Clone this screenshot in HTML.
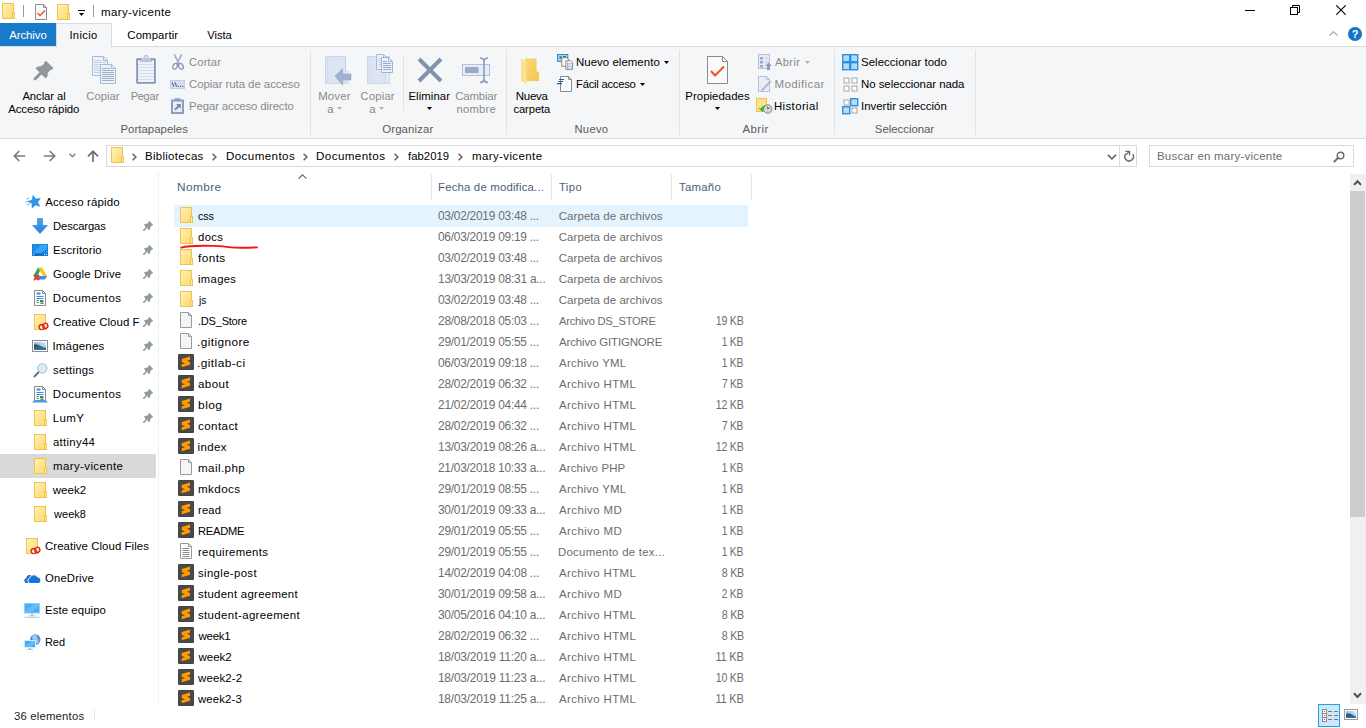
<!DOCTYPE html>
<html lang="es"><head><meta charset="utf-8"><title>mary-vicente</title>
<style>
html,body{margin:0;padding:0;}
body{width:1366px;height:728px;position:relative;overflow:hidden;background:#fff;font-family:"Liberation Sans", "DejaVu Sans", sans-serif;font-size:12px;}
.t{position:absolute;white-space:nowrap;line-height:16px;height:16px;}
.c{width:0;display:flex;justify-content:center;}
.c span{display:inline-block;flex:none;}
.r{position:absolute;display:block;}

</style></head><body>
<svg width="0" height="0" style="position:absolute;left:0;top:0"><defs>
<linearGradient id="fg" x1="0" y1="0" x2="1" y2="1"><stop offset="0" stop-color="#fff1b8"/><stop offset="1" stop-color="#ffd96b"/></linearGradient>
<linearGradient id="dlg" x1="0" y1="0" x2="0" y2="1"><stop offset="0" stop-color="#4ba3ef"/><stop offset="1" stop-color="#2583dc"/></linearGradient>
<linearGradient id="nf" x1="0" y1="0" x2="1" y2="1"><stop offset="0" stop-color="#f7d877"/><stop offset="1" stop-color="#f3c64f"/></linearGradient>
<linearGradient id="sky" x1="0" y1="1" x2="1" y2="0"><stop offset="0" stop-color="#3f8fd6"/><stop offset="1" stop-color="#e6f3fb"/></linearGradient>
</defs></svg>
<div class="r" style="left:0px;top:46px;width:1366px;height:92px;background:#f5f6f7;"></div>
<div class="r" style="left:0px;top:46px;width:1366px;height:1px;background:#dadbdc;"></div>
<div class="r" style="left:0px;top:138px;width:1366px;height:1px;background:#dadbdc;"></div>
<div class="r" style="left:0px;top:23px;width:56px;height:23px;background:#1979ca;"></div>
<div class="r" style="left:56px;top:23px;width:56px;height:24px;background:#f5f6f7;border:1px solid #dadbdc;border-bottom:none;box-sizing:border-box;"></div>
<svg class="r" style="left:2px;top:3px;" width="13" height="16" viewBox="0 0 13 16"><rect x="0.5" y="0.5" width="11" height="15" fill="#ffe08a" stroke="#ecc451"/><rect x="1" y="1" width="10" height="14" fill="url(#fg)"/><rect x="10.5" y="9.5" width="2" height="6" fill="#ffe9a6" stroke="#ecc451"/></svg>
<div class="r" style="left:23px;top:5px;width:1px;height:12px;background:#9a9a9a;"></div>
<svg class="r" style="left:35px;top:4px;" width="12" height="16" viewBox="0 0 12 16"><path d="M0.5 0.5 H8.5 L11.5 3.5 V15.5 H0.5 Z" fill="#f7f8f9" stroke="#8c8c8c"/><path d="M8.5 0.5 V3.5 H11.5" fill="none" stroke="#8c8c8c"/><path d="M2.5 9 L5 11.5 L10 6.5" fill="none" stroke="#f4511e" stroke-width="1.4"/></svg>
<svg class="r" style="left:57px;top:4px;" width="13" height="16" viewBox="0 0 13 16"><rect x="0.5" y="0.5" width="11" height="15" fill="#ffe08a" stroke="#ecc451"/><rect x="1" y="1" width="10" height="14" fill="url(#fg)"/><rect x="10.5" y="9.5" width="2" height="6" fill="#ffe9a6" stroke="#ecc451"/></svg>
<div class="r" style="left:78px;top:10px;width:7px;height:1px;background:#000;"></div>
<svg class="r" style="left:79px;top:13px;" width="5" height="3" viewBox="0 0 5 3"><path d="M0 0 H5 L2.5 3 Z" fill="#000"/></svg>
<div class="r" style="left:93px;top:5px;width:1px;height:12px;background:#9a9a9a;"></div>
<span class="t " id="t1" style="left:101.10px;top:4px;color:#000;font-size:11.5px;letter-spacing:0.400px;transform:scaleX(0.9962);transform-origin:0 50%;">mary-vicente</span>
<div class="r" style="left:1245px;top:10px;width:10px;height:1px;background:#000;"></div>
<svg class="r" style="left:1290px;top:5px;" width="10" height="10" viewBox="0 0 10 10"><path d="M2.5 2.5 V0.5 H9.5 V7.5 H7.5" fill="none" stroke="#000"/><rect x="0.5" y="2.5" width="7" height="7" fill="none" stroke="#000"/></svg>
<svg class="r" style="left:1336px;top:5px;" width="10" height="10" viewBox="0 0 10 10"><path d="M0.3 0.3 L9.7 9.7 M9.7 0.3 L0.3 9.7" stroke="#000" stroke-width="1.1" fill="none"/></svg>
<div class="t c" style="left:28.34px;top:27px;"><span id="t2" style="color:#fff;font-size:11.5px;letter-spacing:-0.073px;transform:scaleX(0.9931);transform-origin:50% 50%;">Archivo</span></div>
<div class="t c" style="left:83.75px;top:27px;"><span id="t3" style="color:#000;font-size:11.5px;letter-spacing:0.376px;transform:scaleX(0.9727);transform-origin:50% 50%;">Inicio</span></div>
<div class="t c" style="left:152.77px;top:27px;"><span id="t4" style="color:#000;font-size:11.5px;letter-spacing:0.121px;transform:scaleX(0.9870);transform-origin:50% 50%;">Compartir</span></div>
<div class="t c" style="left:219.41px;top:27px;"><span id="t5" style="color:#000;font-size:11.5px;letter-spacing:-0.074px;transform:scaleX(0.9731);transform-origin:50% 50%;">Vista</span></div>
<svg class="r" style="left:1329px;top:31px;" width="9" height="5" viewBox="0 0 9 5"><path d="M0.5 4.5 L4.5 0.7 L8.5 4.5" fill="none" stroke="#a0a0a0" stroke-width="1.1"/></svg>
<div class="r" style="left:1348px;top:27px;width:14px;height:14px;border-radius:7px;background:#1572c8;color:#fff;font-weight:bold;font-size:11px;line-height:14px;text-align:center;">?</div>
<div class="r" style="left:310px;top:50px;width:1px;height:85px;background:#e2e3e4;"></div>
<div class="r" style="left:506px;top:50px;width:1px;height:85px;background:#e2e3e4;"></div>
<div class="r" style="left:679px;top:50px;width:1px;height:85px;background:#e2e3e4;"></div>
<div class="r" style="left:834px;top:50px;width:1px;height:85px;background:#e2e3e4;"></div>
<div class="r" style="left:975px;top:50px;width:1px;height:85px;background:#e2e3e4;"></div>
<div class="r" style="left:403px;top:56px;width:1px;height:55px;background:#e2e3e4;"></div>
<svg class="r" style="left:24.3px;top:50.5px;" width="39" height="39" viewBox="0 0 39 39"><path d="M21.91 9.64 L29.36 17.09 L27.57 18.88 L26.05 19.02 L23.43 22.74 L23.84 24.81 L21.64 27.57 L17.64 23.57 L11.85 29.36 L9.64 29.36 L9.64 27.15 L15.43 21.36 L11.43 17.36 L14.19 15.16 L16.26 15.57 L19.98 12.95 L20.12 11.43 Z" fill="#8f979c"/></svg>
<div class="t c" style="left:44.16px;top:88px;"><span id="t6" style="color:#000;font-size:11.5px;letter-spacing:-0.076px;transform:scaleX(0.9810);transform-origin:50% 50%;">Anclar al</span></div>
<div class="t c" style="left:43.64px;top:101px;"><span id="t7" style="color:#000;font-size:11.5px;letter-spacing:-0.106px;transform:scaleX(0.9962);transform-origin:50% 50%;">Acceso rápido</span></div>
<svg class="r" style="left:92px;top:56px;" width="24" height="28" viewBox="0 0 24 28"><path d="M0.5 0.5 H11.5 L15.5 4.5 V19.5 H0.5 Z" fill="#ecf1fa" stroke="#a9b8d6"/><path d="M11.5 0.5 V4.5 H15.5" fill="none" stroke="#a9b8d6"/><path d="M2 4.5 H10" stroke="#c5d0e6"/><path d="M2 6.5 H14" stroke="#c5d0e6"/><path d="M2 8.5 H14" stroke="#c5d0e6"/><path d="M2 10.5 H14" stroke="#c5d0e6"/><path d="M2 12.5 H14" stroke="#c5d0e6"/><path d="M2 14.5 H14" stroke="#c5d0e6"/><path d="M2 16.5 H14" stroke="#c5d0e6"/><path d="M8.5 8.5 H19.5 L23.5 12.5 V27.5 H8.5 Z" fill="#ecf1fa" stroke="#a9b8d6"/><path d="M19.5 8.5 V12.5 H23.5" fill="none" stroke="#a9b8d6"/><path d="M10 12.5 H18" stroke="#9fb0cf"/><path d="M10 14.5 H22" stroke="#9fb0cf"/><path d="M10 16.5 H22" stroke="#9fb0cf"/><path d="M10 18.5 H22" stroke="#9fb0cf"/><path d="M10 20.5 H22" stroke="#9fb0cf"/><path d="M10 22.5 H22" stroke="#9fb0cf"/><path d="M10 24.5 H22" stroke="#9fb0cf"/></svg>
<div class="t c" style="left:102.71px;top:88px;"><span id="t8" style="color:#8a8a8a;font-size:11.5px;letter-spacing:-0.004px;transform:scaleX(0.9838);transform-origin:50% 50%;">Copiar</span></div>
<svg class="r" style="left:136px;top:55px;" width="20" height="29" viewBox="0 0 20 29"><rect x="0.200" y="3.200" width="19.600" height="25.600" rx="1.200" fill="#8596ba"/><rect x="2" y="5.300" width="16" height="21.700" fill="#eef2fb"/><path d="M2.500 9.500 H17.500 M2.500 12.500 H17.500 M2.500 15.500 H17.500 M2.500 18.500 H17.500 M2.500 21.500 H17.500 M2.500 24.500 H17.500" stroke="#d3dbee"/><path d="M6 3.500 H14 L16 6.200 H4 Z" fill="#c9d3ea"/><path d="M4 6.200 H16" stroke="#8f9fc2" stroke-width="0.800"/><rect x="8.200" y="0.600" width="3.600" height="3.400" rx="1.300" fill="#e3e8f4" stroke="#a3b0cf" stroke-width="1"/></svg>
<div class="t c" style="left:145.13px;top:88px;"><span id="t9" style="color:#8a8a8a;font-size:11.5px;letter-spacing:-0.250px;transform:scaleX(0.9571);transform-origin:50% 50%;">Pegar</span></div>
<svg class="r" style="left:172px;top:54px;" width="12" height="16" viewBox="0 0 12 16"><path d="M2.300 0.300 L7.300 10.500 M9.700 0.300 L4.700 10.500" stroke="#a3b0cc" stroke-width="1.700" fill="none"/><ellipse cx="3.100" cy="12.300" rx="2.100" ry="3" transform="rotate(28 3.100 12.300)" fill="none" stroke="#8797ba" stroke-width="1.400"/><ellipse cx="8.900" cy="12.300" rx="2.100" ry="3" transform="rotate(-28 8.900 12.300)" fill="none" stroke="#8797ba" stroke-width="1.400"/></svg>
<span class="t " id="t10" style="left:189.24px;top:54px;color:#8a8a8a;font-size:11.5px;letter-spacing:0.160px;transform:scaleX(0.9745);transform-origin:0 50%;">Cortar</span>
<svg class="r" style="left:170px;top:80px;" width="15" height="9" viewBox="0 0 15 9"><rect x="0.500" y="0.500" width="14" height="8" fill="#d8e0f0" stroke="#c3cee6"/><path d="M2 2.300 L4 6.800 M4.800 2.300 L6.800 6.800" stroke="#5f709b" stroke-width="1.200" fill="none"/><path d="M7.800 6.300 H9 M10 6.300 H11.200 M12.200 6.300 H13.400" stroke="#5f709b" stroke-width="1.200"/></svg>
<span class="t " id="t11" style="left:188.91px;top:76px;color:#8a8a8a;font-size:11.5px;letter-spacing:-0.068px;transform:scaleX(0.9973);transform-origin:0 50%;">Copiar ruta de acceso</span>
<svg class="r" style="left:171px;top:98px;" width="13" height="16" viewBox="0 0 13 16"><rect x="1" y="2.500" width="11" height="12.500" fill="#e8edf7" stroke="#8d9dc0" stroke-width="2"/><rect x="3.500" y="0.300" width="6" height="2" fill="#8d9dc0"/><path d="M4 11.800 L8 7.800" fill="none" stroke="#7486ae" stroke-width="2"/><path d="M5 6 H9.800 V10.800 Z" fill="#7486ae"/></svg>
<span class="t " id="t12" style="left:188.82px;top:98px;color:#8a8a8a;font-size:11.5px;letter-spacing:-0.130px;transform:scaleX(0.9931);transform-origin:0 50%;">Pegar acceso directo</span>
<div class="t c" style="left:154.13px;top:121px;"><span id="t13" style="color:#5b5b5b;font-size:11.5px;letter-spacing:0.049px;transform:scaleX(0.9876);transform-origin:50% 50%;">Portapapeles</span></div>
<svg class="r" style="left:325px;top:56px;" width="27" height="30" viewBox="0 0 27 30"><rect x="0.500" y="0.500" width="20" height="27" fill="#dde5f3" stroke="#c9d5ea"/><path d="M2.800 1 V27" stroke="#cfd9ec"/><rect x="20.500" y="15.500" width="2.500" height="12" fill="#e3e9f5" stroke="#d0daec"/><path d="M10 20 L17.600 12.800 V18 H26 V24 H17.600 V29.200 Z" fill="#a3b1cd" stroke="#93a3c4" stroke-width="0.600"/></svg>
<div class="t c" style="left:334.76px;top:88px;"><span id="t14" style="color:#8a8a8a;font-size:11.5px;letter-spacing:0.184px;transform:scaleX(0.9898);transform-origin:50% 50%;">Mover</span></div>
<div class="t c" style="left:330.37px;top:101px;"><span id="t15" style="color:#8a8a8a;font-size:11.5px;letter-spacing:-0.155px;">a</span></div>
<svg class="r" style="left:337px;top:107px;" width="5" height="3" viewBox="0 0 5 3"><path d="M0 0 H5 L2.5 3 Z" fill="#b0b0b0"/></svg>
<svg class="r" style="left:367px;top:53px;" width="27" height="32" viewBox="0 0 27 32"><rect x="0.500" y="3.500" width="21.800" height="27" fill="#dde5f3" stroke="#c9d5ea"/><path d="M2.800 4 V30" stroke="#cfd9ec"/><rect x="18.300" y="19" width="4" height="11.500" fill="#e4eaf6" stroke="#cdd7eb"/><g transform="translate(9,1)"><path d="M0.5 0.5 H7.5 L11.5 4.5 V15.5 H0.5 Z" fill="#eef2fb" stroke="#a9b8d6"/><path d="M7.5 0.5 V4.5 H11.5" fill="none" stroke="#a9b8d6"/><path d="M2 4.5 H6" stroke="#c9d3e8"/><path d="M2 6.5 H10" stroke="#c9d3e8"/><path d="M2 8.5 H10" stroke="#c9d3e8"/><path d="M2 10.5 H10" stroke="#c9d3e8"/><path d="M2 12.5 H10" stroke="#c9d3e8"/></g><g transform="translate(14,4)"><path d="M0.5 0.5 H7.5 L11.5 4.5 V15.5 H0.5 Z" fill="#eef2fb" stroke="#a3b3d3"/><path d="M7.5 0.5 V4.5 H11.5" fill="none" stroke="#a3b3d3"/><path d="M2 4.5 H6" stroke="#98a9c9"/><path d="M2 6.5 H10" stroke="#98a9c9"/><path d="M2 8.5 H10" stroke="#98a9c9"/><path d="M2 10.5 H10" stroke="#98a9c9"/><path d="M2 12.5 H10" stroke="#98a9c9"/></g></svg>
<div class="t c" style="left:377.49px;top:88px;"><span id="t16" style="color:#8a8a8a;font-size:11.5px;letter-spacing:0.260px;transform:scaleX(0.9649);transform-origin:50% 50%;">Copiar</span></div>
<div class="t c" style="left:372.37px;top:101px;"><span id="t17" style="color:#8a8a8a;font-size:11.5px;letter-spacing:-0.155px;">a</span></div>
<svg class="r" style="left:379px;top:107px;" width="5" height="3" viewBox="0 0 5 3"><path d="M0 0 H5 L2.5 3 Z" fill="#b0b0b0"/></svg>
<svg class="r" style="left:417px;top:57px;" width="26" height="26" viewBox="0 0 26 26"><path d="M2 2 L24 24 M24 2 L2 24" stroke="#8492b2" stroke-width="4" fill="none"/></svg>
<div class="t c" style="left:429.47px;top:88px;"><span id="t18" style="color:#000;font-size:11.5px;letter-spacing:0.116px;transform:scaleX(0.9809);transform-origin:50% 50%;">Eliminar</span></div>
<svg class="r" style="left:427px;top:107px;" width="5" height="3" viewBox="0 0 5 3"><path d="M0 0 H5 L2.5 3 Z" fill="#000"/></svg>
<svg class="r" style="left:462px;top:57px;" width="28" height="27" viewBox="0 0 28 27"><rect x="0.5" y="7.5" width="27" height="11" fill="#e7ecf7" stroke="#b4c1dc"/><rect x="3" y="10" width="13.5" height="6" fill="#9aa9c8"/><path d="M18 1 Q21.5 1 22 4 Q22.5 1 26 1 M18 25.5 Q21.5 25.5 22 22.5 Q22.5 25.5 26 25.5 M22 3.5 V23" fill="none" stroke="#8d9dc0" stroke-width="1.6"/></svg>
<div class="t c" style="left:476.38px;top:88px;"><span id="t19" style="color:#8a8a8a;font-size:11.5px;letter-spacing:-0.169px;transform:scaleX(0.9883);transform-origin:50% 50%;">Cambiar</span></div>
<div class="t c" style="left:476.04px;top:101px;"><span id="t20" style="color:#8a8a8a;font-size:11.5px;letter-spacing:0.261px;transform:scaleX(0.9716);transform-origin:50% 50%;">nombre</span></div>
<div class="t c" style="left:407.92px;top:121px;"><span id="t21" style="color:#5b5b5b;font-size:11.5px;letter-spacing:0.121px;transform:scaleX(0.9885);transform-origin:50% 50%;">Organizar</span></div>
<svg class="r" style="left:521px;top:57px;" width="19" height="28" viewBox="0 0 19 28"><path d="M4 1.5 H15.5 V14 L18 15.5 V24 H4 Z" fill="url(#nf)"/><path d="M0 1.5 L5.5 4.5 V27.5 L0 23.5 Z" fill="#fbe28f"/></svg>
<div class="t c" style="left:531.73px;top:88px;"><span id="t22" style="color:#000;font-size:11.5px;letter-spacing:-0.250px;">Nueva</span></div>
<div class="t c" style="left:531.77px;top:101px;"><span id="t23" style="color:#000;font-size:11.5px;letter-spacing:-0.104px;transform:scaleX(0.9776);transform-origin:50% 50%;">carpeta</span></div>
<svg class="r" style="left:557px;top:54px;" width="16" height="16" viewBox="0 0 16 16"><rect x="0.5" y="0.5" width="10.3" height="6.8" fill="#a9d3ee" stroke="#2e86c7"/><rect x="2.5" y="2" width="2" height="3" fill="#4b8a4b"/><rect x="6" y="2" width="3" height="1.5" fill="#2f6fb5"/><path d="M4.800 3.800 H9.800 L11.500 5.500 V12.300 H4.800 Z" fill="#fdfdfd" stroke="#8a8a8a"/><path d="M8.800 6.700 H13.800 L15.500 8.400 V15.400 H8.800 Z" fill="#fdfdfd" stroke="#8a8a8a"/><path d="M9.500 9.500 H15 M9.500 11 H15 M9.500 12.500 H15 M9.500 14 H15" stroke="#9cc3ee" stroke-width="0.800"/><path d="M10.700 7.500 V15" stroke="#f08a8a" stroke-width="0.900"/></svg>
<span class="t " id="t24" style="left:575.95px;top:54px;color:#000;font-size:11.5px;letter-spacing:0.052px;transform:scaleX(0.9917);transform-origin:0 50%;">Nuevo elemento</span>
<svg class="r" style="left:664px;top:61px;" width="5" height="3" viewBox="0 0 5 3"><path d="M0 0 H5 L2.5 3 Z" fill="#000"/></svg>
<svg class="r" style="left:557px;top:76px;" width="16" height="16" viewBox="0 0 16 16"><path d="M3.500 0.500 H11.500 L14.500 3.500 V15.500 H3.500 Z" fill="#fbfbfc" stroke="#8a8a8a"/><path d="M11.500 0.500 V3.500 H14.500" fill="none" stroke="#8a8a8a"/><path d="M2.100 3.500 H7 M1.200 5.500 H6 M0 7.600 H5" stroke="#1660a8" stroke-width="1.100"/></svg>
<span class="t " id="t25" style="left:575.74px;top:76px;color:#000;font-size:11.5px;letter-spacing:-0.250px;transform:scaleX(0.9781);transform-origin:0 50%;">Fácil acceso</span>
<svg class="r" style="left:640px;top:83px;" width="5" height="3" viewBox="0 0 5 3"><path d="M0 0 H5 L2.5 3 Z" fill="#000"/></svg>
<div class="t c" style="left:591.63px;top:121px;"><span id="t26" style="color:#5b5b5b;font-size:11.5px;letter-spacing:0.322px;transform:scaleX(0.9753);transform-origin:50% 50%;">Nuevo</span></div>
<svg class="r" style="left:707px;top:56px;" width="21" height="28" viewBox="0 0 21 28"><path d="M0.5 0.5 H15.5 L20.5 5.5 V27.5 H0.5 Z" fill="#f9fafb" stroke="#8c8c8c"/><path d="M15.5 0.5 V5.5 H20.5" fill="none" stroke="#8c8c8c"/><path d="M4 15 L8 19.5 L17 10.5" fill="none" stroke="#f4511e" stroke-width="2"/></svg>
<div class="t c" style="left:717.85px;top:88px;"><span id="t27" style="color:#000;font-size:11.5px;letter-spacing:0.032px;transform:scaleX(0.9904);transform-origin:50% 50%;">Propiedades</span></div>
<svg class="r" style="left:715px;top:107px;" width="5" height="3" viewBox="0 0 5 3"><path d="M0 0 H5 L2.5 3 Z" fill="#000"/></svg>
<svg class="r" style="left:758px;top:54px;" width="14" height="16" viewBox="0 0 14 16"><rect x="0.5" y="0.5" width="11" height="14" fill="#e4eaf6" stroke="#b4c1dc"/><path d="M2 3 H5 V5.500 H2 Z M2 7 H5 V9.5 H2 Z M2 11 H5 V13.5 H2 Z" fill="#9aa9c8"/><path d="M6.5 4 H10 M6.500 8 H10" stroke="#c3cde3"/><path d="M10.5 8.5 L14 12 H12 V16 H9 V12 H7 Z" fill="#8d9dc0"/></svg>
<span class="t " id="t28" style="left:774.90px;top:54px;color:#8a8a8a;font-size:11.5px;letter-spacing:0.345px;transform:scaleX(0.9718);transform-origin:0 50%;">Abrir</span>
<svg class="r" style="left:805px;top:61px;" width="5" height="3" viewBox="0 0 5 3"><path d="M0 0 H5 L2.5 3 Z" fill="#b0b0b0"/></svg>
<svg class="r" style="left:758px;top:76px;" width="14" height="16" viewBox="0 0 14 16"><path d="M0.5 0.5 H8.5 L11.5 3.5 V15.5 H0.5 Z" fill="#e7ecf7" stroke="#b4c1dc"/><path d="M8.5 0.5 V3.5 H11.5" fill="none" stroke="#b4c1dc"/><path d="M3 14 L12 4.500 L13.500 6 L4.500 15 Z" fill="#aab6d3"/></svg>
<span class="t " id="t29" style="left:774.44px;top:76px;color:#8a8a8a;font-size:11.5px;letter-spacing:0.400px;">Modificar</span>
<svg class="r" style="left:756px;top:98px;" width="17" height="16" viewBox="0 0 17 16"><rect x="0.500" y="0.500" width="10" height="13" fill="#ffe08a" stroke="#ecc451"/><circle cx="11.700" cy="11" r="4.300" fill="#dcdcdc" stroke="#7d7d7d" stroke-width="0.900"/><path d="M11.700 8.300 V11 L13.700 9.600" fill="none" stroke="#444" stroke-width="0.800"/><path d="M11.700 13.300 V14.300 M9 11 H9.800 M13.800 11 H14.500" stroke="#666" stroke-width="0.600"/><path d="M2 10.300 L7.200 14 L7 11.300 Q8.500 9.500 10.200 7.200 Q6.500 7 4.800 10.500 Z" fill="#2db53a"/></svg>
<span class="t " id="t30" style="left:774.38px;top:98px;color:#000;font-size:11.5px;letter-spacing:0.397px;transform:scaleX(0.9898);transform-origin:0 50%;">Historial</span>
<div class="t c" style="left:755.55px;top:121px;"><span id="t31" style="color:#5b5b5b;font-size:11.5px;letter-spacing:0.376px;">Abrir</span></div>
<svg class="r" style="left:842px;top:54px;" width="17" height="17" viewBox="0 0 17 17"><rect x="0.7" y="0.7" width="7" height="7" fill="#b3dcf9" stroke="#2e90e0" stroke-width="1.4"/><rect x="8.7" y="0.7" width="7" height="7" fill="#b3dcf9" stroke="#2e90e0" stroke-width="1.4"/><rect x="0.7" y="8.7" width="7" height="7" fill="#b3dcf9" stroke="#2e90e0" stroke-width="1.4"/><rect x="8.7" y="8.7" width="7" height="7" fill="#b3dcf9" stroke="#2e90e0" stroke-width="1.4"/></svg>
<span class="t " id="t32" style="left:860.61px;top:54px;color:#000;font-size:11.5px;letter-spacing:0.036px;transform:scaleX(0.9965);transform-origin:0 50%;">Seleccionar todo</span>
<svg class="r" style="left:842px;top:76px;" width="17" height="17" viewBox="0 0 17 17"><rect x="2" y="2" width="5" height="5" fill="#fdfdfd" stroke="#a6a6a6"/><rect x="10" y="2" width="5" height="5" fill="#fdfdfd" stroke="#a6a6a6"/><rect x="2" y="10" width="5" height="5" fill="#fdfdfd" stroke="#a6a6a6"/><rect x="10" y="10" width="5" height="5" fill="#fdfdfd" stroke="#a6a6a6"/></svg>
<span class="t " id="t33" style="left:861.05px;top:76px;color:#000;font-size:11.5px;letter-spacing:-0.053px;transform:scaleX(0.9959);transform-origin:0 50%;">No seleccionar nada</span>
<svg class="r" style="left:842px;top:98px;" width="17" height="17" viewBox="0 0 17 17"><rect x="2" y="2" width="5" height="5" fill="#fdfdfd" stroke="#a6a6a6"/><rect x="8.7" y="0.7" width="7" height="7" fill="#b3dcf9" stroke="#2e90e0" stroke-width="1.4"/><rect x="0.7" y="8.7" width="7" height="7" fill="#b3dcf9" stroke="#2e90e0" stroke-width="1.4"/><rect x="10" y="10" width="5" height="5" fill="#fdfdfd" stroke="#a6a6a6"/></svg>
<span class="t " id="t34" style="left:860.56px;top:98px;color:#000;font-size:11.5px;letter-spacing:0.012px;transform:scaleX(0.9913);transform-origin:0 50%;">Invertir selección</span>
<div class="t c" style="left:904.46px;top:121px;"><span id="t35" style="color:#5b5b5b;font-size:11.5px;letter-spacing:-0.067px;">Seleccionar</span></div>
<svg class="r" style="left:12.5px;top:149.8px;" width="13" height="12" viewBox="0 0 13 12"><path d="M12.2 6 H1.6 M6.3 1 L1.3 6 L6.3 11" fill="none" stroke="#7c7c7c" stroke-width="1.7"/></svg>
<svg class="r" style="left:42.5px;top:149.8px;" width="13" height="12" viewBox="0 0 13 12"><path d="M0.8 6 H11.4 M6.7 1 L11.7 6 L6.7 11" fill="none" stroke="#7c7c7c" stroke-width="1.7"/></svg>
<svg class="r" style="left:69px;top:153px;" width="7" height="5" viewBox="0 0 7 5"><path d="M0.6 0.8 L3.5 3.7 L6.4 0.8" fill="none" stroke="#808080" stroke-width="1.4"/></svg>
<svg class="r" style="left:87px;top:150px;" width="12" height="13" viewBox="0 0 12 13"><path d="M6 12 V1.6 M1 6.3 L6 1.300 L11 6.3" fill="none" stroke="#6e6e6e" stroke-width="1.7"/></svg>
<div class="r" style="left:106px;top:145px;width:1031px;height:22px;background:#fff;border:1px solid #d9d9d9;box-sizing:border-box;"></div>
<div class="r" style="left:1119px;top:146px;width:1px;height:20px;background:#d9d9d9;"></div>
<svg class="r" style="left:111px;top:147px;" width="13" height="16" viewBox="0 0 13 16"><rect x="0.5" y="0.5" width="11" height="15" fill="#ffe08a" stroke="#ecc451"/><rect x="1" y="1" width="10" height="14" fill="url(#fg)"/><rect x="10.5" y="9.5" width="2" height="6" fill="#ffe9a6" stroke="#ecc451"/></svg>
<svg class="r" style="left:132px;top:152.5px;" width="5" height="8" viewBox="0 0 5 8"><path d="M0.6 0.8 L3.9 4 L0.6 7.2" fill="none" stroke="#666" stroke-width="1.6"/></svg>
<svg class="r" style="left:212px;top:152.5px;" width="5" height="8" viewBox="0 0 5 8"><path d="M0.6 0.8 L3.9 4 L0.6 7.2" fill="none" stroke="#666" stroke-width="1.6"/></svg>
<svg class="r" style="left:303px;top:152.5px;" width="5" height="8" viewBox="0 0 5 8"><path d="M0.6 0.8 L3.9 4 L0.6 7.2" fill="none" stroke="#666" stroke-width="1.6"/></svg>
<svg class="r" style="left:394px;top:152.5px;" width="5" height="8" viewBox="0 0 5 8"><path d="M0.6 0.8 L3.9 4 L0.6 7.2" fill="none" stroke="#666" stroke-width="1.6"/></svg>
<svg class="r" style="left:458px;top:152.5px;" width="5" height="8" viewBox="0 0 5 8"><path d="M0.6 0.8 L3.9 4 L0.6 7.2" fill="none" stroke="#666" stroke-width="1.6"/></svg>
<span class="t " id="t36" style="left:145.47px;top:148px;color:#000;font-size:11.5px;letter-spacing:0.315px;transform:scaleX(0.9911);transform-origin:0 50%;">Bibliotecas</span>
<span class="t " id="t37" style="left:225.66px;top:148px;color:#000;font-size:11.5px;letter-spacing:0.400px;transform:scaleX(1.0077);transform-origin:0 50%;">Documentos</span>
<span class="t " id="t38" style="left:316.16px;top:148px;color:#000;font-size:11.5px;letter-spacing:0.400px;transform:scaleX(1.0115);transform-origin:0 50%;">Documentos</span>
<span class="t " id="t39" style="left:407.86px;top:148px;color:#000;font-size:11.5px;letter-spacing:0.054px;transform:scaleX(0.9805);transform-origin:0 50%;">fab2019</span>
<span class="t " id="t40" style="left:471.98px;top:148px;color:#000;font-size:11.5px;letter-spacing:0.400px;transform:scaleX(0.9971);transform-origin:0 50%;">mary-vicente</span>
<svg class="r" style="left:1107px;top:154px;" width="10" height="7" viewBox="0 0 10 7"><path d="M0.8 0.8 L4.9 4.9 L9 0.8" fill="none" stroke="#6a6a6a" stroke-width="1.7"/></svg>
<svg class="r" style="left:1123px;top:150px;" width="12" height="13" viewBox="0 0 12 13"><path d="M2.9 3.8 A4.3 4.3 0 1 0 9.7 4.2" fill="none" stroke="#6e6e6e" stroke-width="1.5"/><path d="M2.3 1.4 H6.6 V5.6" fill="none" stroke="#6e6e6e" stroke-width="1.3"/><path d="M6.4 1.6 L3.2 4.4" fill="none" stroke="#6e6e6e" stroke-width="1.3"/></svg>
<div class="r" style="left:1149px;top:145px;width:205px;height:22px;background:#fff;border:1px solid #d9d9d9;box-sizing:border-box;"></div>
<span class="t " id="t41" style="left:1156.96px;top:148px;color:#6d6d6d;font-size:11.5px;letter-spacing:0.214px;">Buscar en mary-vicente</span>
<svg class="r" style="left:1333px;top:151px;" width="12" height="12" viewBox="0 0 12 12"><circle cx="7.500" cy="4.500" r="3.300" fill="none" stroke="#666" stroke-width="1.400"/><path d="M5 7 L0.800 11.200" stroke="#666" stroke-width="1.800"/></svg>
<div class="r" style="left:158px;top:172px;width:1px;height:532px;background:#f0f0f0;"></div>
<div class="r" style="left:0px;top:454px;width:156px;height:24px;background:#d9d9d9;"></div>
<svg class="r" style="left:25px;top:195px;" width="16" height="13" viewBox="0 0 16 13"><g transform="rotate(-14 9.5 6.5)"><path d="M9.5 0.3 L11.3 4.5 L15.8 4.9 L12.4 7.9 L13.4 12.3 L9.5 10 L5.6 12.3 L6.6 7.9 L3.2 4.9 L7.7 4.5 Z" fill="#2e97ee" stroke="#1c7fd6" stroke-width="0.5"/></g><path d="M1.3 4.2 L4.4 3.2 M0.4 7.3 L4.2 6.1 M1.6 10 L5 8.9" stroke="#5db2f3" stroke-width="0.9"/></svg>
<span class="t " id="t42" style="left:45.16px;top:194px;color:#000;font-size:11.5px;letter-spacing:0.143px;">Acceso rápido</span>
<svg class="r" style="left:32px;top:218px;" width="16" height="16" viewBox="0 0 16 16"><path d="M5.500 0.400 H10.500 V7.400 H15.300 L8 15.600 L0.700 7.400 H5.500 Z" fill="url(#dlg)" stroke="#1d78cf" stroke-width="0.600"/></svg>
<span class="t " id="t43" style="left:52.53px;top:218px;color:#000;font-size:11.5px;letter-spacing:-0.116px;transform:scaleX(0.9777);transform-origin:0 50%;">Descargas</span>
<svg class="r" style="left:138px;top:216px;" width="20" height="20" viewBox="0 0 20 20"><path d="M11.24 4.94 L15.06 8.76 L14.14 9.68 L13.36 9.75 L12.02 11.66 L12.23 12.72 L11.10 14.14 L9.05 12.09 L6.08 15.06 L4.94 15.06 L4.94 13.92 L7.91 10.95 L5.86 8.90 L7.28 7.77 L8.34 7.98 L10.25 6.64 L10.32 5.86 Z" fill="#8f9ba3"/></svg>
<svg class="r" style="left:32px;top:244px;" width="16" height="12" viewBox="0 0 16 12"><rect x="0" y="0" width="16" height="12" fill="#1b8fe8"/><path d="M0.5 9.5 L9.5 0.500 H15.500 V3.500 L8.500 9.500 Z" fill="#35a5f5"/><rect x="0.250" y="0.250" width="15.500" height="11.500" fill="none" stroke="#1479cf" stroke-width="0.500"/><rect x="0.500" y="9.500" width="15" height="2" fill="#0f66b8"/><path d="M1.200 10.500 H2.200 M12 10.500 H13 M13.800 10.500 H14.800" stroke="#fff" stroke-width="1"/></svg>
<span class="t " id="t44" style="left:52.55px;top:242px;color:#000;font-size:11.5px;letter-spacing:0.171px;transform:scaleX(0.9838);transform-origin:0 50%;">Escritorio</span>
<svg class="r" style="left:138px;top:240px;" width="20" height="20" viewBox="0 0 20 20"><path d="M11.24 4.94 L15.06 8.76 L14.14 9.68 L13.36 9.75 L12.02 11.66 L12.23 12.72 L11.10 14.14 L9.05 12.09 L6.08 15.06 L4.94 15.06 L4.94 13.92 L7.91 10.95 L5.86 8.90 L7.28 7.77 L8.34 7.98 L10.25 6.64 L10.32 5.86 Z" fill="#8f9ba3"/></svg>
<svg class="r" style="left:33px;top:267px;" width="14" height="14" viewBox="0 0 14 14"><path d="M5 0.500 H9 L14 9 H10 Z" fill="#f7c325"/><path d="M5 0.500 L0.500 8.500 L2.500 12 L7 4 Z" fill="#2da55a"/><path d="M4.500 9 H14 L12 12.500 H2.500 Z" fill="#4a86e8"/><path d="M1 8 L6 13 M6 8 L1 13" stroke="#e5392d" stroke-width="1.800"/></svg>
<span class="t " id="t45" style="left:52.99px;top:266px;color:#000;font-size:11.5px;letter-spacing:0.152px;transform:scaleX(0.9899);transform-origin:0 50%;">Google Drive</span>
<svg class="r" style="left:138px;top:264px;" width="20" height="20" viewBox="0 0 20 20"><path d="M11.24 4.94 L15.06 8.76 L14.14 9.68 L13.36 9.75 L12.02 11.66 L12.23 12.72 L11.10 14.14 L9.05 12.09 L6.08 15.06 L4.94 15.06 L4.94 13.92 L7.91 10.95 L5.86 8.90 L7.28 7.77 L8.34 7.98 L10.25 6.64 L10.32 5.86 Z" fill="#8f9ba3"/></svg>
<svg class="r" style="left:34px;top:290px;" width="12" height="16" viewBox="0 0 12 16"><path d="M0.500 0.500 H8.500 L11.500 3.500 V15.500 H0.500 Z" fill="#fff" stroke="#8c8c8c"/><path d="M8.500 0.500 V3.500 H11.500" fill="none" stroke="#8c8c8c"/><path d="M2.500 6.500 H9.500 M2.500 8.500 H9.500" stroke="#2f8fe4"/><path d="M2.500 3.500 H6.500" stroke="#2f8fe4" stroke-width="2"/><path d="M2.500 10.500 H5 M2.500 12.500 H5 M6.500 13.500 H9.500" stroke="#777"/><rect x="6" y="10" width="3.500" height="2.500" fill="#3b8a4a"/></svg>
<span class="t " id="t46" style="left:52.84px;top:290px;color:#000;font-size:11.5px;letter-spacing:0.400px;">Documentos</span>
<svg class="r" style="left:138px;top:288px;" width="20" height="20" viewBox="0 0 20 20"><path d="M11.24 4.94 L15.06 8.76 L14.14 9.68 L13.36 9.75 L12.02 11.66 L12.23 12.72 L11.10 14.14 L9.05 12.09 L6.08 15.06 L4.94 15.06 L4.94 13.92 L7.91 10.95 L5.86 8.90 L7.28 7.77 L8.34 7.98 L10.25 6.64 L10.32 5.86 Z" fill="#8f9ba3"/></svg>
<svg class="r" style="left:34px;top:314px;" width="13" height="16" viewBox="0 0 13 16"><rect x="0.5" y="0.5" width="11" height="15" fill="#ffe08a" stroke="#ecc451"/><rect x="1" y="1" width="10" height="14" fill="url(#fg)"/><rect x="10.5" y="9.5" width="2" height="6" fill="#ffe9a6" stroke="#ecc451"/></svg>
<svg class="r" style="left:37.5px;top:321.5px;" width="11" height="9" viewBox="0 0 11 9"><g transform="rotate(-20 5.500 4.500)"><ellipse cx="3.700" cy="4.500" rx="2.700" ry="2.500" fill="#fff" stroke="#e1251b" stroke-width="1.400"/><ellipse cx="7.300" cy="4.500" rx="2.700" ry="2.500" fill="#fff" fill-opacity="0.500" stroke="#e1251b" stroke-width="1.400"/><path d="M5.500 2.700 A2.600 2.500 0 0 1 5.500 6.300" fill="none" stroke="#e1251b" stroke-width="1.200"/></g></svg>
<span class="t " id="t47" style="left:53.11px;top:314px;color:#000;font-size:11.5px;letter-spacing:0.053px;transform:scaleX(0.9940);transform-origin:0 50%;">Creative Cloud F</span>
<svg class="r" style="left:138px;top:312px;" width="20" height="20" viewBox="0 0 20 20"><path d="M11.24 4.94 L15.06 8.76 L14.14 9.68 L13.36 9.75 L12.02 11.66 L12.23 12.72 L11.10 14.14 L9.05 12.09 L6.08 15.06 L4.94 15.06 L4.94 13.92 L7.91 10.95 L5.86 8.90 L7.28 7.77 L8.34 7.98 L10.25 6.64 L10.32 5.86 Z" fill="#8f9ba3"/></svg>
<svg class="r" style="left:32px;top:340px;" width="16" height="12" viewBox="0 0 16 12"><rect x="0.500" y="0.500" width="15" height="11" fill="#fff" stroke="#8c8c8c"/><rect x="2" y="2" width="12" height="8" fill="url(#sky)"/><path d="M2 4.500 Q5 3.500 8 5.800 T14 7.800 V10 H2 Z" fill="#35605a"/><path d="M2 8.300 Q8 7 14 8.800 V10 H2 Z" fill="#2f6fb0"/></svg>
<span class="t " id="t48" style="left:52.40px;top:338px;color:#000;font-size:11.5px;letter-spacing:0.197px;">Imágenes</span>
<svg class="r" style="left:138px;top:336px;" width="20" height="20" viewBox="0 0 20 20"><path d="M11.24 4.94 L15.06 8.76 L14.14 9.68 L13.36 9.75 L12.02 11.66 L12.23 12.72 L11.10 14.14 L9.05 12.09 L6.08 15.06 L4.94 15.06 L4.94 13.92 L7.91 10.95 L5.86 8.90 L7.28 7.77 L8.34 7.98 L10.25 6.64 L10.32 5.86 Z" fill="#8f9ba3"/></svg>
<svg class="r" style="left:32.5px;top:363px;" width="15" height="15" viewBox="0 0 15 15"><circle cx="9.300" cy="5.400" r="4.700" fill="#d9ecf9" stroke="#9cc0dc" stroke-width="1"/><path d="M5.200 8.700 Q6 9.300 6.600 10" stroke="#8aa" stroke-width="0.500" fill="none"/><path d="M5.800 9 L0.900 14" stroke="#636b73" stroke-width="1.800"/></svg>
<span class="t " id="t49" style="left:53.10px;top:362px;color:#000;font-size:11.5px;letter-spacing:0.291px;transform:scaleX(0.9840);transform-origin:0 50%;">settings</span>
<svg class="r" style="left:138px;top:360px;" width="20" height="20" viewBox="0 0 20 20"><path d="M11.24 4.94 L15.06 8.76 L14.14 9.68 L13.36 9.75 L12.02 11.66 L12.23 12.72 L11.10 14.14 L9.05 12.09 L6.08 15.06 L4.94 15.06 L4.94 13.92 L7.91 10.95 L5.86 8.90 L7.28 7.77 L8.34 7.98 L10.25 6.64 L10.32 5.86 Z" fill="#8f9ba3"/></svg>
<svg class="r" style="left:32px;top:386px;" width="16" height="17" viewBox="0 0 16 17"><g transform="translate(2,0)"><path d="M0.500 0.500 H8.500 L11.500 3.500 V14.500 H0.500 Z" fill="#fff" stroke="#8c8c8c"/><path d="M8.500 0.500 V3.500 H11.500" fill="none" stroke="#8c8c8c"/><path d="M2.500 6.500 H9.500 M2.500 8.500 H9.500" stroke="#2f8fe4"/><path d="M2.500 3.500 H6.500" stroke="#2f8fe4" stroke-width="2"/><path d="M2.500 10.500 H5 M2.500 12.500 H5 M6.500 13.500 H9.500" stroke="#777"/><rect x="6" y="10" width="3.500" height="2.500" fill="#3b8a4a"/></g><path d="M2 14.500 H14 L16 16.500 H0 Z" fill="#3ca0ee"/></svg>
<span class="t " id="t50" style="left:52.84px;top:386px;color:#000;font-size:11.5px;letter-spacing:0.400px;">Documentos</span>
<svg class="r" style="left:138px;top:384px;" width="20" height="20" viewBox="0 0 20 20"><path d="M11.24 4.94 L15.06 8.76 L14.14 9.68 L13.36 9.75 L12.02 11.66 L12.23 12.72 L11.10 14.14 L9.05 12.09 L6.08 15.06 L4.94 15.06 L4.94 13.92 L7.91 10.95 L5.86 8.90 L7.28 7.77 L8.34 7.98 L10.25 6.64 L10.32 5.86 Z" fill="#8f9ba3"/></svg>
<svg class="r" style="left:34px;top:410px;" width="13" height="16" viewBox="0 0 13 16"><rect x="0.5" y="0.5" width="11" height="15" fill="#ffe08a" stroke="#ecc451"/><rect x="1" y="1" width="10" height="14" fill="url(#fg)"/><rect x="10.5" y="9.5" width="2" height="6" fill="#ffe9a6" stroke="#ecc451"/></svg>
<span class="t " id="t51" style="left:52.64px;top:410px;color:#000;font-size:11.5px;letter-spacing:0.400px;">LumY</span>
<svg class="r" style="left:138px;top:408px;" width="20" height="20" viewBox="0 0 20 20"><path d="M11.24 4.94 L15.06 8.76 L14.14 9.68 L13.36 9.75 L12.02 11.66 L12.23 12.72 L11.10 14.14 L9.05 12.09 L6.08 15.06 L4.94 15.06 L4.94 13.92 L7.91 10.95 L5.86 8.90 L7.28 7.77 L8.34 7.98 L10.25 6.64 L10.32 5.86 Z" fill="#8f9ba3"/></svg>
<svg class="r" style="left:34px;top:434px;" width="13" height="16" viewBox="0 0 13 16"><rect x="0.5" y="0.5" width="11" height="15" fill="#ffe08a" stroke="#ecc451"/><rect x="1" y="1" width="10" height="14" fill="url(#fg)"/><rect x="10.5" y="9.5" width="2" height="6" fill="#ffe9a6" stroke="#ecc451"/></svg>
<span class="t " id="t52" style="left:53.19px;top:434px;color:#000;font-size:11.5px;letter-spacing:0.306px;transform:scaleX(0.9850);transform-origin:0 50%;">attiny44</span>
<svg class="r" style="left:34px;top:458px;" width="13" height="16" viewBox="0 0 13 16"><rect x="0.5" y="0.5" width="11" height="15" fill="#ffe08a" stroke="#ecc451"/><rect x="1" y="1" width="10" height="14" fill="url(#fg)"/><rect x="10.5" y="9.5" width="2" height="6" fill="#ffe9a6" stroke="#ecc451"/></svg>
<span class="t " id="t53" style="left:52.92px;top:458px;color:#000;font-size:11.5px;letter-spacing:0.400px;transform:scaleX(0.9961);transform-origin:0 50%;">mary-vicente</span>
<svg class="r" style="left:34px;top:482px;" width="13" height="16" viewBox="0 0 13 16"><rect x="0.5" y="0.5" width="11" height="15" fill="#ffe08a" stroke="#ecc451"/><rect x="1" y="1" width="10" height="14" fill="url(#fg)"/><rect x="10.5" y="9.5" width="2" height="6" fill="#ffe9a6" stroke="#ecc451"/></svg>
<span class="t " id="t54" style="left:52.65px;top:482px;color:#000;font-size:11.5px;letter-spacing:0.060px;">week2</span>
<svg class="r" style="left:34px;top:506px;" width="13" height="16" viewBox="0 0 13 16"><rect x="0.5" y="0.5" width="11" height="15" fill="#ffe08a" stroke="#ecc451"/><rect x="1" y="1" width="10" height="14" fill="url(#fg)"/><rect x="10.5" y="9.5" width="2" height="6" fill="#ffe9a6" stroke="#ecc451"/></svg>
<span class="t " id="t55" style="left:53.56px;top:506px;color:#000;font-size:11.5px;letter-spacing:0.055px;transform:scaleX(0.9548);transform-origin:0 50%;">week8</span>
<svg class="r" style="left:26px;top:538px;" width="13" height="16" viewBox="0 0 13 16"><rect x="0.5" y="0.5" width="11" height="15" fill="#ffe08a" stroke="#ecc451"/><rect x="1" y="1" width="10" height="14" fill="url(#fg)"/><rect x="10.5" y="9.5" width="2" height="6" fill="#ffe9a6" stroke="#ecc451"/></svg>
<svg class="r" style="left:29.5px;top:545.5px;" width="11" height="9" viewBox="0 0 11 9"><g transform="rotate(-20 5.500 4.500)"><ellipse cx="3.700" cy="4.500" rx="2.700" ry="2.500" fill="#fff" stroke="#e1251b" stroke-width="1.400"/><ellipse cx="7.300" cy="4.500" rx="2.700" ry="2.500" fill="#fff" fill-opacity="0.500" stroke="#e1251b" stroke-width="1.400"/><path d="M5.500 2.700 A2.600 2.500 0 0 1 5.500 6.300" fill="none" stroke="#e1251b" stroke-width="1.200"/></g></svg>
<span class="t " id="t56" style="left:45.13px;top:538px;color:#000;font-size:11.5px;letter-spacing:0.061px;transform:scaleX(0.9921);transform-origin:0 50%;">Creative Cloud Files</span>
<svg class="r" style="left:24px;top:572.5px;" width="16.5" height="10.5" viewBox="0 0 16.5 10.5"><path d="M2.800 10.300 A2.700 2.700 0 0 1 2.300 5 A3.400 3.400 0 0 1 8.300 3.200 L6 10.300 Z" fill="#1a73d9"/><path d="M6.500 10.700 A3 3 0 0 1 5.800 4.900 A4.200 4.200 0 0 1 13.600 4.100 A3.200 3.200 0 0 1 13.600 10.700 Z" fill="#1a73d9" stroke="#fff" stroke-width="0.900"/><rect x="0" y="10.250" width="16.500" height="1" fill="#fff"/></svg>
<span class="t " id="t57" style="left:45.01px;top:570px;color:#000;font-size:11.5px;letter-spacing:0.149px;transform:scaleX(0.9837);transform-origin:0 50%;">OneDrive</span>
<svg class="r" style="left:24px;top:603px;" width="16" height="15" viewBox="0 0 16 15"><rect x="0.500" y="0.500" width="15" height="9.500" fill="#46aef3" stroke="#8fd0f8"/><path d="M1 8.500 L9.500 1 H15 V3.500 L7 9.500 H1 Z" fill="#63bdf7"/><path d="M7 10.500 H9 V13 H7 Z" fill="#b5c2cd"/><path d="M4.500 12.800 H11.500" stroke="#b5c2cd" stroke-width="0.800"/><path d="M0.300 14.300 H15.700" stroke="#a8c4dc" stroke-width="1"/></svg>
<span class="t " id="t58" style="left:44.70px;top:602px;color:#000;font-size:11.5px;letter-spacing:0.094px;transform:scaleX(0.9879);transform-origin:0 50%;">Este equipo</span>
<svg class="r" style="left:24px;top:634px;" width="17" height="16" viewBox="0 0 17 16"><circle cx="11.300" cy="5.500" r="5.200" fill="#5595d6"/><path d="M8.500 1.800 Q10.500 0.300 13 1.300 Q12 3.500 13.500 5 Q15 6.500 14.500 8.500 Q12.500 10 11.500 8 Q10.500 6 9 5.500 Q7.500 4 8.500 1.800 Z" fill="#a6d3ef" opacity="0.850"/><rect x="0.500" y="6.500" width="11" height="7" fill="#43acf3" stroke="#d5ecfb"/><path d="M1 12.500 L8 7 H11 V9 L6.500 13 H1 Z" fill="#63bdf7"/><path d="M5 14 H7 V15 H5 Z" fill="#a9b5c0"/><path d="M3 15.500 H9" stroke="#a9b5c0" stroke-width="0.800"/></svg>
<span class="t " id="t59" style="left:44.74px;top:634px;color:#000;font-size:11.5px;letter-spacing:-0.073px;transform:scaleX(0.9542);transform-origin:0 50%;">Red</span>
<div class="r" style="left:431px;top:174px;width:1px;height:25px;background:#e5e5e5;"></div>
<div class="r" style="left:551px;top:174px;width:1px;height:25px;background:#e5e5e5;"></div>
<div class="r" style="left:671px;top:174px;width:1px;height:25px;background:#e5e5e5;"></div>
<div class="r" style="left:751px;top:174px;width:1px;height:25px;background:#e5e5e5;"></div>
<span class="t " id="t60" style="left:176.66px;top:179px;color:#4c607a;font-size:11.5px;letter-spacing:0.400px;transform:scaleX(1.0295);transform-origin:0 50%;">Nombre</span>
<span class="t " id="t61" style="left:437.82px;top:179px;color:#4c607a;font-size:11.5px;letter-spacing:0.183px;transform:scaleX(0.9893);transform-origin:0 50%;">Fecha de modifica...</span>
<span class="t " id="t62" style="left:558.66px;top:179px;color:#4c607a;font-size:11.5px;letter-spacing:0.400px;transform:scaleX(0.9778);transform-origin:0 50%;">Tipo</span>
<span class="t " id="t63" style="left:678.68px;top:179px;color:#4c607a;font-size:11.5px;letter-spacing:0.286px;transform:scaleX(0.9856);transform-origin:0 50%;">Tamaño</span>
<svg class="r" style="left:297.5px;top:174px;" width="9" height="5" viewBox="0 0 9 5"><path d="M0.600 4.600 L4.500 0.800 L8.400 4.600" fill="none" stroke="#6a6a6a" stroke-width="1.200"/></svg>
<div class="r" style="left:174px;top:205px;width:574px;height:22px;background:#e5f3ff;"></div>
<svg class="r" style="left:180px;top:207px;" width="13" height="16" viewBox="0 0 13 16"><rect x="0.5" y="0.5" width="11" height="15" fill="#ffe08a" stroke="#ecc451"/><rect x="1" y="1" width="10" height="14" fill="url(#fg)"/><rect x="10.5" y="9.5" width="2" height="6" fill="#ffe9a6" stroke="#ecc451"/></svg>
<span class="t " id="t64" style="left:198.05px;top:208px;color:#000;font-size:11.5px;letter-spacing:-0.052px;transform:scaleX(0.9288);transform-origin:0 50%;">css</span>
<span class="t " id="t65" style="left:438.35px;top:208px;color:#6d6d6d;font-size:12px;letter-spacing:-0.250px;transform:scaleX(0.9918);transform-origin:0 50%;">03/02/2019 03:48 ...</span>
<span class="t " id="t66" style="left:558.75px;top:208px;color:#6d6d6d;font-size:11.5px;letter-spacing:0.051px;">Carpeta de archivos</span>
<svg class="r" style="left:180px;top:228px;" width="13" height="16" viewBox="0 0 13 16"><rect x="0.5" y="0.5" width="11" height="15" fill="#ffe08a" stroke="#ecc451"/><rect x="1" y="1" width="10" height="14" fill="url(#fg)"/><rect x="10.5" y="9.5" width="2" height="6" fill="#ffe9a6" stroke="#ecc451"/></svg>
<span class="t " id="t67" style="left:197.93px;top:229px;color:#000;font-size:11.5px;letter-spacing:0.400px;transform:scaleX(0.9801);transform-origin:0 50%;">docs</span>
<span class="t " id="t68" style="left:438.35px;top:229px;color:#6d6d6d;font-size:12px;letter-spacing:-0.250px;transform:scaleX(0.9918);transform-origin:0 50%;">06/03/2019 09:19 ...</span>
<span class="t " id="t69" style="left:558.75px;top:229px;color:#6d6d6d;font-size:11.5px;letter-spacing:0.051px;">Carpeta de archivos</span>
<svg class="r" style="left:180px;top:249px;" width="13" height="16" viewBox="0 0 13 16"><rect x="0.5" y="0.5" width="11" height="15" fill="#ffe08a" stroke="#ecc451"/><rect x="1" y="1" width="10" height="14" fill="url(#fg)"/><rect x="10.5" y="9.5" width="2" height="6" fill="#ffe9a6" stroke="#ecc451"/></svg>
<span class="t " id="t70" style="left:198.34px;top:250px;color:#000;font-size:11.5px;letter-spacing:0.400px;transform:scaleX(1.0274);transform-origin:0 50%;">fonts</span>
<span class="t " id="t71" style="left:438.35px;top:250px;color:#6d6d6d;font-size:12px;letter-spacing:-0.250px;transform:scaleX(0.9918);transform-origin:0 50%;">03/02/2019 03:48 ...</span>
<span class="t " id="t72" style="left:558.75px;top:250px;color:#6d6d6d;font-size:11.5px;letter-spacing:0.051px;">Carpeta de archivos</span>
<svg class="r" style="left:180px;top:270px;" width="13" height="16" viewBox="0 0 13 16"><rect x="0.5" y="0.5" width="11" height="15" fill="#ffe08a" stroke="#ecc451"/><rect x="1" y="1" width="10" height="14" fill="url(#fg)"/><rect x="10.5" y="9.5" width="2" height="6" fill="#ffe9a6" stroke="#ecc451"/></svg>
<span class="t " id="t73" style="left:197.61px;top:271px;color:#000;font-size:11.5px;letter-spacing:0.381px;transform:scaleX(0.9729);transform-origin:0 50%;">images</span>
<span class="t " id="t74" style="left:438.16px;top:271px;color:#6d6d6d;font-size:12px;letter-spacing:-0.250px;transform:scaleX(0.9937);transform-origin:0 50%;">13/03/2019 08:31 a...</span>
<span class="t " id="t75" style="left:558.75px;top:271px;color:#6d6d6d;font-size:11.5px;letter-spacing:0.051px;">Carpeta de archivos</span>
<svg class="r" style="left:180px;top:291px;" width="13" height="16" viewBox="0 0 13 16"><rect x="0.5" y="0.5" width="11" height="15" fill="#ffe08a" stroke="#ecc451"/><rect x="1" y="1" width="10" height="14" fill="url(#fg)"/><rect x="10.5" y="9.5" width="2" height="6" fill="#ffe9a6" stroke="#ecc451"/></svg>
<span class="t " id="t76" style="left:198.66px;top:292px;color:#000;font-size:11.5px;letter-spacing:0.100px;transform:scaleX(0.8741);transform-origin:0 50%;">js</span>
<span class="t " id="t77" style="left:438.35px;top:292px;color:#6d6d6d;font-size:12px;letter-spacing:-0.250px;transform:scaleX(0.9918);transform-origin:0 50%;">03/02/2019 03:48 ...</span>
<span class="t " id="t78" style="left:558.75px;top:292px;color:#6d6d6d;font-size:11.5px;letter-spacing:0.051px;">Carpeta de archivos</span>
<svg class="r" style="left:180px;top:312px;" width="12" height="16" viewBox="0 0 12 16"><path d="M0.5 0.5 H8.5 L11.5 3.5 V15.5 H0.5 Z" fill="#f4f5f7" stroke="#9a9a9a"/><path d="M8.5 0.5 V3.5 H11.5" fill="none" stroke="#9a9a9a"/></svg>
<span class="t " id="t79" style="left:197.68px;top:313px;color:#000;font-size:11.5px;letter-spacing:-0.250px;transform:scaleX(0.9619);transform-origin:0 50%;">.DS_Store</span>
<span class="t " id="t80" style="left:438.12px;top:313px;color:#6d6d6d;font-size:12px;letter-spacing:-0.250px;transform:scaleX(0.9924);transform-origin:0 50%;">28/08/2018 05:03 ...</span>
<span class="t " id="t81" style="left:559.11px;top:313px;color:#6d6d6d;font-size:11.5px;letter-spacing:-0.250px;transform:scaleX(0.9730);transform-origin:0 50%;">Archivo DS_STORE</span>
<span class="t " id="t82" style="right:622.28px;top:313px;color:#6d6d6d;font-size:12px;letter-spacing:-0.250px;transform:scaleX(0.8786);transform-origin:100% 50%;">19 KB</span>
<svg class="r" style="left:180px;top:333px;" width="12" height="16" viewBox="0 0 12 16"><path d="M0.5 0.5 H8.5 L11.5 3.5 V15.5 H0.5 Z" fill="#f4f5f7" stroke="#9a9a9a"/><path d="M8.5 0.5 V3.5 H11.5" fill="none" stroke="#9a9a9a"/></svg>
<span class="t " id="t83" style="left:197.03px;top:334px;color:#000;font-size:11.5px;letter-spacing:0.400px;transform:scaleX(1.0286);transform-origin:0 50%;">.gitignore</span>
<span class="t " id="t84" style="left:438.12px;top:334px;color:#6d6d6d;font-size:12px;letter-spacing:-0.250px;transform:scaleX(0.9924);transform-origin:0 50%;">29/01/2019 05:55 ...</span>
<span class="t " id="t85" style="left:559.07px;top:334px;color:#6d6d6d;font-size:11.5px;letter-spacing:-0.151px;transform:scaleX(0.9974);transform-origin:0 50%;">Archivo GITIGNORE</span>
<span class="t " id="t86" style="right:622.67px;top:334px;color:#6d6d6d;font-size:12px;letter-spacing:-0.250px;transform:scaleX(0.8522);transform-origin:100% 50%;">1 KB</span>
<svg class="r" style="left:178px;top:354px;" width="16" height="16" viewBox="0 0 16 16"><rect x="0" y="0" width="16" height="16" rx="1.3" fill="#434343"/><rect x="1" y="1" width="14" height="14" rx="1" fill="#494949"/><path d="M12 2.6 V5.7 L8.9 6.8 L12 7.9 V10.7 L3.7 13.3 V10.3 L7 9.2 L3.7 8 V4.9 Z" fill="#ff9a00"/></svg>
<span class="t " id="t87" style="left:197.24px;top:355px;color:#000;font-size:11.5px;letter-spacing:0.400px;transform:scaleX(1.0367);transform-origin:0 50%;">.gitlab-ci</span>
<span class="t " id="t88" style="left:438.35px;top:355px;color:#6d6d6d;font-size:12px;letter-spacing:-0.250px;transform:scaleX(0.9918);transform-origin:0 50%;">06/03/2019 09:18 ...</span>
<span class="t " id="t89" style="left:559.20px;top:355px;color:#6d6d6d;font-size:11.5px;letter-spacing:0.272px;transform:scaleX(0.9917);transform-origin:0 50%;">Archivo YML</span>
<span class="t " id="t90" style="right:622.67px;top:355px;color:#6d6d6d;font-size:12px;letter-spacing:-0.250px;transform:scaleX(0.8522);transform-origin:100% 50%;">1 KB</span>
<svg class="r" style="left:178px;top:375px;" width="16" height="16" viewBox="0 0 16 16"><rect x="0" y="0" width="16" height="16" rx="1.3" fill="#434343"/><rect x="1" y="1" width="14" height="14" rx="1" fill="#494949"/><path d="M12 2.6 V5.7 L8.9 6.8 L12 7.9 V10.7 L3.7 13.3 V10.3 L7 9.2 L3.7 8 V4.9 Z" fill="#ff9a00"/></svg>
<span class="t " id="t91" style="left:197.82px;top:376px;color:#000;font-size:11.5px;letter-spacing:0.400px;transform:scaleX(1.0096);transform-origin:0 50%;">about</span>
<span class="t " id="t92" style="left:438.12px;top:376px;color:#6d6d6d;font-size:12px;letter-spacing:-0.250px;transform:scaleX(0.9924);transform-origin:0 50%;">28/02/2019 06:32 ...</span>
<span class="t " id="t93" style="left:559.33px;top:376px;color:#6d6d6d;font-size:11.5px;letter-spacing:0.383px;transform:scaleX(0.9970);transform-origin:0 50%;">Archivo HTML</span>
<span class="t " id="t94" style="right:622.62px;top:376px;color:#6d6d6d;font-size:12px;letter-spacing:-0.250px;transform:scaleX(0.8446);transform-origin:100% 50%;">7 KB</span>
<svg class="r" style="left:178px;top:396px;" width="16" height="16" viewBox="0 0 16 16"><rect x="0" y="0" width="16" height="16" rx="1.3" fill="#434343"/><rect x="1" y="1" width="14" height="14" rx="1" fill="#494949"/><path d="M12 2.6 V5.7 L8.9 6.8 L12 7.9 V10.7 L3.7 13.3 V10.3 L7 9.2 L3.7 8 V4.9 Z" fill="#ff9a00"/></svg>
<span class="t " id="t95" style="left:197.84px;top:397px;color:#000;font-size:11.5px;letter-spacing:0.400px;transform:scaleX(1.0492);transform-origin:0 50%;">blog</span>
<span class="t " id="t96" style="left:438.12px;top:397px;color:#6d6d6d;font-size:12px;letter-spacing:-0.250px;transform:scaleX(0.9924);transform-origin:0 50%;">21/02/2019 04:44 ...</span>
<span class="t " id="t97" style="left:559.33px;top:397px;color:#6d6d6d;font-size:11.5px;letter-spacing:0.383px;transform:scaleX(0.9970);transform-origin:0 50%;">Archivo HTML</span>
<span class="t " id="t98" style="right:622.28px;top:397px;color:#6d6d6d;font-size:12px;letter-spacing:-0.250px;transform:scaleX(0.8786);transform-origin:100% 50%;">12 KB</span>
<svg class="r" style="left:178px;top:417px;" width="16" height="16" viewBox="0 0 16 16"><rect x="0" y="0" width="16" height="16" rx="1.3" fill="#434343"/><rect x="1" y="1" width="14" height="14" rx="1" fill="#494949"/><path d="M12 2.6 V5.7 L8.9 6.8 L12 7.9 V10.7 L3.7 13.3 V10.3 L7 9.2 L3.7 8 V4.9 Z" fill="#ff9a00"/></svg>
<span class="t " id="t99" style="left:197.86px;top:418px;color:#000;font-size:11.5px;letter-spacing:0.400px;transform:scaleX(1.0093);transform-origin:0 50%;">contact</span>
<span class="t " id="t100" style="left:438.12px;top:418px;color:#6d6d6d;font-size:12px;letter-spacing:-0.250px;transform:scaleX(0.9924);transform-origin:0 50%;">28/02/2019 06:32 ...</span>
<span class="t " id="t101" style="left:559.33px;top:418px;color:#6d6d6d;font-size:11.5px;letter-spacing:0.383px;transform:scaleX(0.9970);transform-origin:0 50%;">Archivo HTML</span>
<span class="t " id="t102" style="right:622.62px;top:418px;color:#6d6d6d;font-size:12px;letter-spacing:-0.250px;transform:scaleX(0.8446);transform-origin:100% 50%;">7 KB</span>
<svg class="r" style="left:178px;top:438px;" width="16" height="16" viewBox="0 0 16 16"><rect x="0" y="0" width="16" height="16" rx="1.3" fill="#434343"/><rect x="1" y="1" width="14" height="14" rx="1" fill="#494949"/><path d="M12 2.6 V5.7 L8.9 6.8 L12 7.9 V10.7 L3.7 13.3 V10.3 L7 9.2 L3.7 8 V4.9 Z" fill="#ff9a00"/></svg>
<span class="t " id="t103" style="left:197.52px;top:439px;color:#000;font-size:11.5px;letter-spacing:0.400px;">index</span>
<span class="t " id="t104" style="left:438.16px;top:439px;color:#6d6d6d;font-size:12px;letter-spacing:-0.250px;transform:scaleX(0.9937);transform-origin:0 50%;">13/03/2019 08:26 a...</span>
<span class="t " id="t105" style="left:559.33px;top:439px;color:#6d6d6d;font-size:11.5px;letter-spacing:0.383px;transform:scaleX(0.9970);transform-origin:0 50%;">Archivo HTML</span>
<span class="t " id="t106" style="right:622.28px;top:439px;color:#6d6d6d;font-size:12px;letter-spacing:-0.250px;transform:scaleX(0.8786);transform-origin:100% 50%;">12 KB</span>
<svg class="r" style="left:180px;top:459px;" width="12" height="16" viewBox="0 0 12 16"><path d="M0.5 0.5 H8.5 L11.5 3.5 V15.5 H0.5 Z" fill="#f4f5f7" stroke="#9a9a9a"/><path d="M8.5 0.5 V3.5 H11.5" fill="none" stroke="#9a9a9a"/></svg>
<span class="t " id="t107" style="left:197.66px;top:460px;color:#000;font-size:11.5px;letter-spacing:0.400px;transform:scaleX(1.0104);transform-origin:0 50%;">mail.php</span>
<span class="t " id="t108" style="left:438.36px;top:460px;color:#6d6d6d;font-size:12px;letter-spacing:-0.250px;transform:scaleX(0.9911);transform-origin:0 50%;">21/03/2018 10:33 a...</span>
<span class="t " id="t109" style="left:559.20px;top:460px;color:#6d6d6d;font-size:11.5px;letter-spacing:0.155px;transform:scaleX(0.9913);transform-origin:0 50%;">Archivo PHP</span>
<span class="t " id="t110" style="right:622.67px;top:460px;color:#6d6d6d;font-size:12px;letter-spacing:-0.250px;transform:scaleX(0.8522);transform-origin:100% 50%;">1 KB</span>
<svg class="r" style="left:178px;top:480px;" width="16" height="16" viewBox="0 0 16 16"><rect x="0" y="0" width="16" height="16" rx="1.3" fill="#434343"/><rect x="1" y="1" width="14" height="14" rx="1" fill="#494949"/><path d="M12 2.6 V5.7 L8.9 6.8 L12 7.9 V10.7 L3.7 13.3 V10.3 L7 9.2 L3.7 8 V4.9 Z" fill="#ff9a00"/></svg>
<span class="t " id="t111" style="left:197.67px;top:481px;color:#000;font-size:11.5px;letter-spacing:0.400px;transform:scaleX(1.0109);transform-origin:0 50%;">mkdocs</span>
<span class="t " id="t112" style="left:438.12px;top:481px;color:#6d6d6d;font-size:12px;letter-spacing:-0.250px;transform:scaleX(0.9924);transform-origin:0 50%;">29/01/2019 08:55 ...</span>
<span class="t " id="t113" style="left:559.20px;top:481px;color:#6d6d6d;font-size:11.5px;letter-spacing:0.272px;transform:scaleX(0.9917);transform-origin:0 50%;">Archivo YML</span>
<span class="t " id="t114" style="right:622.67px;top:481px;color:#6d6d6d;font-size:12px;letter-spacing:-0.250px;transform:scaleX(0.8522);transform-origin:100% 50%;">1 KB</span>
<svg class="r" style="left:178px;top:501px;" width="16" height="16" viewBox="0 0 16 16"><rect x="0" y="0" width="16" height="16" rx="1.3" fill="#434343"/><rect x="1" y="1" width="14" height="14" rx="1" fill="#494949"/><path d="M12 2.6 V5.7 L8.9 6.8 L12 7.9 V10.7 L3.7 13.3 V10.3 L7 9.2 L3.7 8 V4.9 Z" fill="#ff9a00"/></svg>
<span class="t " id="t115" style="left:197.92px;top:502px;color:#000;font-size:11.5px;letter-spacing:0.194px;transform:scaleX(0.9674);transform-origin:0 50%;">read</span>
<span class="t " id="t116" style="left:438.30px;top:502px;color:#6d6d6d;font-size:12px;letter-spacing:-0.250px;transform:scaleX(0.9919);transform-origin:0 50%;">30/01/2019 09:33 a...</span>
<span class="t " id="t117" style="left:559.02px;top:502px;color:#6d6d6d;font-size:11.5px;letter-spacing:0.400px;transform:scaleX(0.9962);transform-origin:0 50%;">Archivo MD</span>
<span class="t " id="t118" style="right:622.67px;top:502px;color:#6d6d6d;font-size:12px;letter-spacing:-0.250px;transform:scaleX(0.8522);transform-origin:100% 50%;">1 KB</span>
<svg class="r" style="left:178px;top:522px;" width="16" height="16" viewBox="0 0 16 16"><rect x="0" y="0" width="16" height="16" rx="1.3" fill="#434343"/><rect x="1" y="1" width="14" height="14" rx="1" fill="#494949"/><path d="M12 2.6 V5.7 L8.9 6.8 L12 7.9 V10.7 L3.7 13.3 V10.3 L7 9.2 L3.7 8 V4.9 Z" fill="#ff9a00"/></svg>
<span class="t " id="t119" style="left:197.78px;top:523px;color:#000;font-size:11.5px;letter-spacing:-0.250px;transform:scaleX(0.9664);transform-origin:0 50%;">README</span>
<span class="t " id="t120" style="left:438.12px;top:523px;color:#6d6d6d;font-size:12px;letter-spacing:-0.250px;transform:scaleX(0.9924);transform-origin:0 50%;">29/01/2019 05:55 ...</span>
<span class="t " id="t121" style="left:559.02px;top:523px;color:#6d6d6d;font-size:11.5px;letter-spacing:0.400px;transform:scaleX(0.9962);transform-origin:0 50%;">Archivo MD</span>
<span class="t " id="t122" style="right:622.67px;top:523px;color:#6d6d6d;font-size:12px;letter-spacing:-0.250px;transform:scaleX(0.8522);transform-origin:100% 50%;">1 KB</span>
<svg class="r" style="left:180px;top:543px;" width="12" height="16" viewBox="0 0 12 16"><path d="M0.5 0.5 H8.5 L11.5 3.5 V15.5 H0.5 Z" fill="#fff" stroke="#9a9a9a"/><path d="M8.5 0.5 V3.5 H11.5" fill="none" stroke="#9a9a9a"/><path d="M2.5 5.5 H9.5 M2.5 7.5 H9.5 M2.5 9.5 H9.5 M2.5 11.5 H9.5 M2.5 13.5 H9.5" stroke="#8c8c8c" fill="none"/></svg>
<span class="t " id="t123" style="left:197.87px;top:544px;color:#000;font-size:11.5px;letter-spacing:0.348px;transform:scaleX(0.9841);transform-origin:0 50%;">requirements</span>
<span class="t " id="t124" style="left:438.12px;top:544px;color:#6d6d6d;font-size:12px;letter-spacing:-0.250px;transform:scaleX(0.9924);transform-origin:0 50%;">29/01/2019 05:55 ...</span>
<span class="t " id="t125" style="left:558.34px;top:544px;color:#6d6d6d;font-size:11.5px;letter-spacing:0.255px;transform:scaleX(0.9936);transform-origin:0 50%;">Documento de tex...</span>
<span class="t " id="t126" style="right:622.67px;top:544px;color:#6d6d6d;font-size:12px;letter-spacing:-0.250px;transform:scaleX(0.8522);transform-origin:100% 50%;">1 KB</span>
<svg class="r" style="left:178px;top:564px;" width="16" height="16" viewBox="0 0 16 16"><rect x="0" y="0" width="16" height="16" rx="1.3" fill="#434343"/><rect x="1" y="1" width="14" height="14" rx="1" fill="#494949"/><path d="M12 2.6 V5.7 L8.9 6.8 L12 7.9 V10.7 L3.7 13.3 V10.3 L7 9.2 L3.7 8 V4.9 Z" fill="#ff9a00"/></svg>
<span class="t " id="t127" style="left:198.13px;top:565px;color:#000;font-size:11.5px;letter-spacing:0.386px;transform:scaleX(0.9841);transform-origin:0 50%;">single-post</span>
<span class="t " id="t128" style="left:438.09px;top:565px;color:#6d6d6d;font-size:12px;letter-spacing:-0.250px;transform:scaleX(0.9930);transform-origin:0 50%;">14/02/2019 04:08 ...</span>
<span class="t " id="t129" style="left:559.33px;top:565px;color:#6d6d6d;font-size:11.5px;letter-spacing:0.383px;transform:scaleX(0.9970);transform-origin:0 50%;">Archivo HTML</span>
<span class="t " id="t130" style="right:622.32px;top:565px;color:#6d6d6d;font-size:12px;letter-spacing:-0.250px;transform:scaleX(0.8897);transform-origin:100% 50%;">8 KB</span>
<svg class="r" style="left:178px;top:585px;" width="16" height="16" viewBox="0 0 16 16"><rect x="0" y="0" width="16" height="16" rx="1.3" fill="#434343"/><rect x="1" y="1" width="14" height="14" rx="1" fill="#494949"/><path d="M12 2.6 V5.7 L8.9 6.8 L12 7.9 V10.7 L3.7 13.3 V10.3 L7 9.2 L3.7 8 V4.9 Z" fill="#ff9a00"/></svg>
<span class="t " id="t131" style="left:197.83px;top:586px;color:#000;font-size:11.5px;letter-spacing:0.296px;transform:scaleX(0.9900);transform-origin:0 50%;">student agreement</span>
<span class="t " id="t132" style="left:438.30px;top:586px;color:#6d6d6d;font-size:12px;letter-spacing:-0.250px;transform:scaleX(0.9919);transform-origin:0 50%;">30/01/2019 09:58 a...</span>
<span class="t " id="t133" style="left:559.02px;top:586px;color:#6d6d6d;font-size:11.5px;letter-spacing:0.400px;transform:scaleX(0.9962);transform-origin:0 50%;">Archivo MD</span>
<span class="t " id="t134" style="right:622.64px;top:586px;color:#6d6d6d;font-size:12px;letter-spacing:-0.250px;transform:scaleX(0.8539);transform-origin:100% 50%;">2 KB</span>
<svg class="r" style="left:178px;top:606px;" width="16" height="16" viewBox="0 0 16 16"><rect x="0" y="0" width="16" height="16" rx="1.3" fill="#434343"/><rect x="1" y="1" width="14" height="14" rx="1" fill="#494949"/><path d="M12 2.6 V5.7 L8.9 6.8 L12 7.9 V10.7 L3.7 13.3 V10.3 L7 9.2 L3.7 8 V4.9 Z" fill="#ff9a00"/></svg>
<span class="t " id="t135" style="left:198.11px;top:607px;color:#000;font-size:11.5px;letter-spacing:0.373px;transform:scaleX(0.9917);transform-origin:0 50%;">student-agreement</span>
<span class="t " id="t136" style="left:438.30px;top:607px;color:#6d6d6d;font-size:12px;letter-spacing:-0.250px;transform:scaleX(0.9919);transform-origin:0 50%;">30/05/2016 04:10 a...</span>
<span class="t " id="t137" style="left:559.33px;top:607px;color:#6d6d6d;font-size:11.5px;letter-spacing:0.383px;transform:scaleX(0.9970);transform-origin:0 50%;">Archivo HTML</span>
<span class="t " id="t138" style="right:622.32px;top:607px;color:#6d6d6d;font-size:12px;letter-spacing:-0.250px;transform:scaleX(0.8897);transform-origin:100% 50%;">8 KB</span>
<svg class="r" style="left:178px;top:627px;" width="16" height="16" viewBox="0 0 16 16"><rect x="0" y="0" width="16" height="16" rx="1.3" fill="#434343"/><rect x="1" y="1" width="14" height="14" rx="1" fill="#494949"/><path d="M12 2.6 V5.7 L8.9 6.8 L12 7.9 V10.7 L3.7 13.3 V10.3 L7 9.2 L3.7 8 V4.9 Z" fill="#ff9a00"/></svg>
<span class="t " id="t139" style="left:198.49px;top:628px;color:#000;font-size:11.5px;letter-spacing:-0.244px;">week1</span>
<span class="t " id="t140" style="left:438.12px;top:628px;color:#6d6d6d;font-size:12px;letter-spacing:-0.250px;transform:scaleX(0.9924);transform-origin:0 50%;">28/02/2019 06:32 ...</span>
<span class="t " id="t141" style="left:559.33px;top:628px;color:#6d6d6d;font-size:11.5px;letter-spacing:0.383px;transform:scaleX(0.9970);transform-origin:0 50%;">Archivo HTML</span>
<span class="t " id="t142" style="right:622.32px;top:628px;color:#6d6d6d;font-size:12px;letter-spacing:-0.250px;transform:scaleX(0.8897);transform-origin:100% 50%;">8 KB</span>
<svg class="r" style="left:178px;top:648px;" width="16" height="16" viewBox="0 0 16 16"><rect x="0" y="0" width="16" height="16" rx="1.3" fill="#434343"/><rect x="1" y="1" width="14" height="14" rx="1" fill="#494949"/><path d="M12 2.6 V5.7 L8.9 6.8 L12 7.9 V10.7 L3.7 13.3 V10.3 L7 9.2 L3.7 8 V4.9 Z" fill="#ff9a00"/></svg>
<span class="t " id="t143" style="left:198.46px;top:649px;color:#000;font-size:11.5px;letter-spacing:-0.002px;">week2</span>
<span class="t " id="t144" style="left:437.93px;top:649px;color:#6d6d6d;font-size:12px;letter-spacing:-0.238px;">18/03/2019 11:20 a...</span>
<span class="t " id="t145" style="left:559.33px;top:649px;color:#6d6d6d;font-size:11.5px;letter-spacing:0.383px;transform:scaleX(0.9970);transform-origin:0 50%;">Archivo HTML</span>
<span class="t " id="t146" style="right:622.28px;top:649px;color:#6d6d6d;font-size:12px;letter-spacing:-0.250px;transform:scaleX(0.9197);transform-origin:100% 50%;">11 KB</span>
<svg class="r" style="left:178px;top:669px;" width="16" height="16" viewBox="0 0 16 16"><rect x="0" y="0" width="16" height="16" rx="1.3" fill="#434343"/><rect x="1" y="1" width="14" height="14" rx="1" fill="#494949"/><path d="M12 2.6 V5.7 L8.9 6.8 L12 7.9 V10.7 L3.7 13.3 V10.3 L7 9.2 L3.7 8 V4.9 Z" fill="#ff9a00"/></svg>
<span class="t " id="t147" style="left:198.18px;top:670px;color:#000;font-size:11.5px;letter-spacing:0.132px;transform:scaleX(0.9970);transform-origin:0 50%;">week2-2</span>
<span class="t " id="t148" style="left:437.93px;top:670px;color:#6d6d6d;font-size:12px;letter-spacing:-0.238px;">18/03/2019 11:23 a...</span>
<span class="t " id="t149" style="left:559.33px;top:670px;color:#6d6d6d;font-size:11.5px;letter-spacing:0.383px;transform:scaleX(0.9970);transform-origin:0 50%;">Archivo HTML</span>
<span class="t " id="t150" style="right:622.28px;top:670px;color:#6d6d6d;font-size:12px;letter-spacing:-0.250px;transform:scaleX(0.8786);transform-origin:100% 50%;">10 KB</span>
<svg class="r" style="left:178px;top:690px;" width="16" height="16" viewBox="0 0 16 16"><rect x="0" y="0" width="16" height="16" rx="1.3" fill="#434343"/><rect x="1" y="1" width="14" height="14" rx="1" fill="#494949"/><path d="M12 2.6 V5.7 L8.9 6.8 L12 7.9 V10.7 L3.7 13.3 V10.3 L7 9.2 L3.7 8 V4.9 Z" fill="#ff9a00"/></svg>
<span class="t " id="t151" style="left:198.22px;top:691px;color:#000;font-size:11.5px;letter-spacing:0.129px;transform:scaleX(0.9885);transform-origin:0 50%;">week2-3</span>
<span class="t " id="t152" style="left:437.93px;top:691px;color:#6d6d6d;font-size:12px;letter-spacing:-0.238px;">18/03/2019 11:25 a...</span>
<span class="t " id="t153" style="left:559.33px;top:691px;color:#6d6d6d;font-size:11.5px;letter-spacing:0.383px;transform:scaleX(0.9970);transform-origin:0 50%;">Archivo HTML</span>
<span class="t " id="t154" style="right:622.28px;top:691px;color:#6d6d6d;font-size:12px;letter-spacing:-0.250px;transform:scaleX(0.9197);transform-origin:100% 50%;">11 KB</span>
<svg class="r" style="left:180px;top:241px;" width="80" height="10" viewBox="0 0 80 10"><path d="M1.2 6.6 C8 4.8 22 4.6 33 4.9 S52 6.9 62 6.8 S73 6.5 77 6.4" fill="none" stroke="#f5141c" stroke-width="1.9" stroke-linecap="round"/></svg>
<div class="r" style="left:1350px;top:174px;width:16px;height:530px;background:#f0f0f0;"></div>
<div class="r" style="left:1350px;top:191px;width:15px;height:326px;background:#cdcdcd;"></div>
<svg class="r" style="left:1353px;top:179px;" width="9" height="7" viewBox="0 0 9 7"><path d="M1 5.9 L4.5 2.2 L8 5.9" fill="none" stroke="#505050" stroke-width="2"/></svg>
<svg class="r" style="left:1353px;top:692px;" width="9" height="7" viewBox="0 0 9 7"><path d="M1 1.3 L4.5 5 L8 1.3" fill="none" stroke="#505050" stroke-width="2"/></svg>
<span class="t " id="t155" style="left:13.77px;top:708px;color:#222;font-size:11.5px;letter-spacing:0.178px;transform:scaleX(0.9872);transform-origin:0 50%;">36 elementos</span>
<div class="r" style="left:94px;top:710px;width:1px;height:11px;background:#e6e6e6;"></div>
<div class="r" style="left:1318px;top:704px;width:22px;height:23px;background:#cce8ff;border:1px solid #26a0da;box-sizing:border-box;"></div>
<svg class="r" style="left:1322px;top:709px;" width="17" height="13" viewBox="0 0 17 13"><rect x="0.500" y="0.500" width="4" height="12" fill="#fff" stroke="#8a8a8a"/><path d="M0.500 4.500 H4.500 M0.500 8.500 H4.500" stroke="#8a8a8a"/><path d="M2 2.500 H3" stroke="#3a7a4a"/><path d="M2 6.500 H3" stroke="#3a6ae0"/><path d="M2 10.500 H3" stroke="#e02020"/><path d="M6 2.500 H10 M12 2.500 H16 M6 6.500 H10 M12 6.500 H16 M6 10.500 H10 M12 10.500 H16" stroke="#777" stroke-width="1.200"/></svg>
<svg class="r" style="left:1344px;top:709px;" width="14" height="11" viewBox="0 0 14 11"><rect x="0.500" y="0.500" width="13" height="10" fill="#fff" stroke="#9a9a9a"/><rect x="2" y="2" width="10" height="7" fill="url(#sky)"/><path d="M2 5 Q5 3.500 8 5.800 T12 7.300 V9 H2 Z" fill="#2c5a66"/><path d="M2 7.800 Q7 6.800 12 8 V9 H2 Z" fill="#2f6fb0"/></svg>
</body></html>
